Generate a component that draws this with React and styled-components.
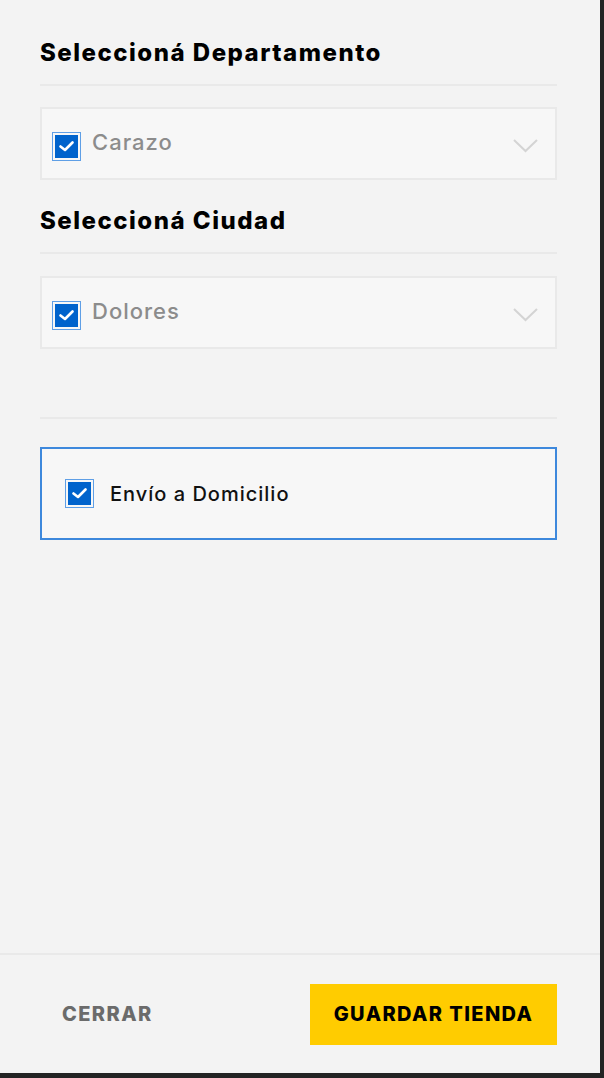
import React from 'react'
import styled, { createGlobalStyle } from 'styled-components'

const GlobalStyle = createGlobalStyle`
  html, body {
    margin: 0;
    padding: 0;
    background: #232323;
  }
  * {
    box-sizing: border-box;
  }
`

const Panel = styled.div`
  width: 600px;
  height: 1073px;
  background: #f3f3f3;
  display: flex;
  flex-direction: column;
  font-family: Inter, "Noto Sans", sans-serif;
`

const Content = styled.div`
  flex: 1;
  padding: 39px 43px 0 40px;
  display: flex;
  flex-direction: column;
`

const Title = styled.h2`
  margin: ${({ $top }) => $top || 0}px 0 0;
  font-size: 24px;
  line-height: 28px;
  font-weight: 800;
  letter-spacing: 1.5px;
  color: #000;
`

const Hr = styled.div`
  height: 2px;
  background: #e9e9e9;
  margin-top: ${({ $top }) => $top}px;
`

const Select = styled.div`
  margin-top: ${({ $top }) => $top}px;
  height: 73px;
  background: #f7f7f7;
  border: 2px solid #e9e9e9;
  display: flex;
  align-items: center;
  padding: 0 17px 0 10px;
  gap: 11px;
`

const Value = styled.span`
  flex: 1;
  font-size: 22px;
  font-weight: 500;
  letter-spacing: 1px;
  color: #8c8c8c;
  margin-top: -3px;
`

const CheckOuter = styled.span`
  width: 29px;
  height: 29px;
  flex: none;
  border: 1px solid #5f9fe6;
  padding: 2px;
  background: #f7f7f7;
  margin-top: ${({ $shift }) => $shift || 0}px;
  display: flex;
`

const CheckInner = styled.span`
  flex: 1;
  background: #0063cc;
  display: flex;
  align-items: center;
  justify-content: center;
`

const Chevron = styled.svg`
  width: 25px;
  height: 14px;
  flex: none;
  margin-top: 4px;
`

const Option = styled.div`
  margin-top: 28px;
  height: 93px;
  background: #f7f7f7;
  border: 2px solid #3d88dc;
  display: flex;
  align-items: center;
  padding: 0 23px;
  gap: 16px;
`

const OptionLabel = styled.span`
  font-size: 20px;
  font-weight: 500;
  letter-spacing: 1px;
  color: #111;
`

const Footer = styled.div`
  height: 120px;
  border-top: 2px solid #e9e9e9;
  display: flex;
  align-items: center;
  justify-content: space-between;
  padding: 0 43px 0 62px;
`

const TextButton = styled.button`
  border: none;
  background: none;
  padding: 0;
  font-family: inherit;
  font-size: 20px;
  font-weight: 800;
  letter-spacing: 1.4px;
  color: #6b6b6b;
  cursor: pointer;
`

const PrimaryButton = styled.button`
  width: 247px;
  height: 61px;
  border: none;
  background: #ffcc00;
  font-family: inherit;
  font-size: 20px;
  font-weight: 800;
  letter-spacing: 1.4px;
  color: #000;
  cursor: pointer;
`

const Check = ({ shift }) => (
  <CheckOuter $shift={shift}>
    <CheckInner>
      <svg width="15" height="11" viewBox="0 0 15 11">
        <polyline points="1.5,5.5 6,9 13.5,1.5" fill="none" stroke="#fff" strokeWidth="2.6" strokeLinecap="round" strokeLinejoin="round" />
      </svg>
    </CheckInner>
  </CheckOuter>
)

const Dropdown = ({ top, value }) => (
  <Select $top={top}>
    <Check shift={5} />
    <Value>{value}</Value>
    <Chevron viewBox="0 0 25 14">
      <polyline points="1,1 12.5,12 24,1" fill="none" stroke="#d4d4d4" strokeWidth="2" />
    </Chevron>
  </Select>
)

const App = () => {
  return (
    <>
      <GlobalStyle />
      <Panel>
        <Content>
          <Title>Seleccioná Departamento</Title>
          <Hr $top={17} />
          <Dropdown top={21} value="Carazo" />
          <Title $top={27}>Seleccioná Ciudad</Title>
          <Hr $top={17} />
          <Dropdown top={22} value="Dolores" />
          <Hr $top={68} />
          <Option>
            <Check />
            <OptionLabel>Envío a Domicilio</OptionLabel>
          </Option>
        </Content>
        <Footer>
          <TextButton>CERRAR</TextButton>
          <PrimaryButton>GUARDAR TIENDA</PrimaryButton>
        </Footer>
      </Panel>
    </>
  )
}

export default App
